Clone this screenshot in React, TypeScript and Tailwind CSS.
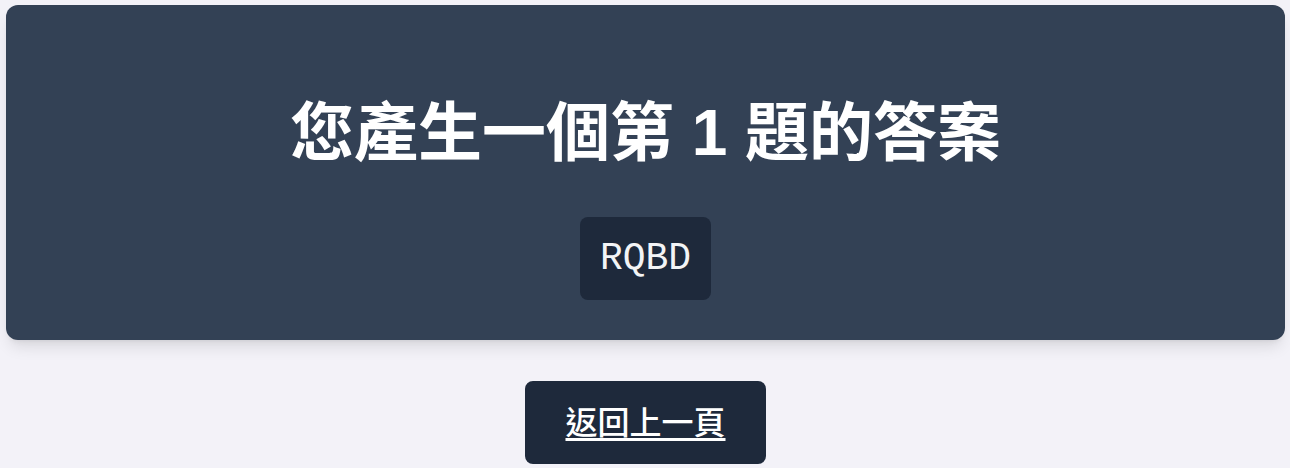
export default function App() {
  return (
    <div className="min-h-[468px] w-full bg-[#f3f2f8] pl-[6px] pr-[5px] pt-[5px] flex flex-col items-center" style={{ fontFamily: '"Liberation Sans", "Noto Sans CJK TC", sans-serif' }}>
      <div className="w-full h-[335px] rounded-xl bg-[#334155] shadow-lg flex flex-col items-center pt-[96px]">
        <h1 className="text-[64px] leading-none font-bold text-white">您產生一個第 1 題的答案</h1>
        <div className="mt-[52px] h-[83px] px-[20px] rounded-lg bg-[#1e293b] flex items-center">
          <span className="text-[38px] text-gray-100" style={{ fontFamily: '"Courier New", Courier, "Nimbus Mono PS", "Liberation Mono", monospace' }}>RQBD</span>
        </div>
      </div>
      <button className="mt-[41px] h-[83px] px-10 rounded-lg bg-[#1e293b] text-white text-[32px] font-medium underline underline-offset-4">
        返回上一頁
      </button>
    </div>
  );
}
